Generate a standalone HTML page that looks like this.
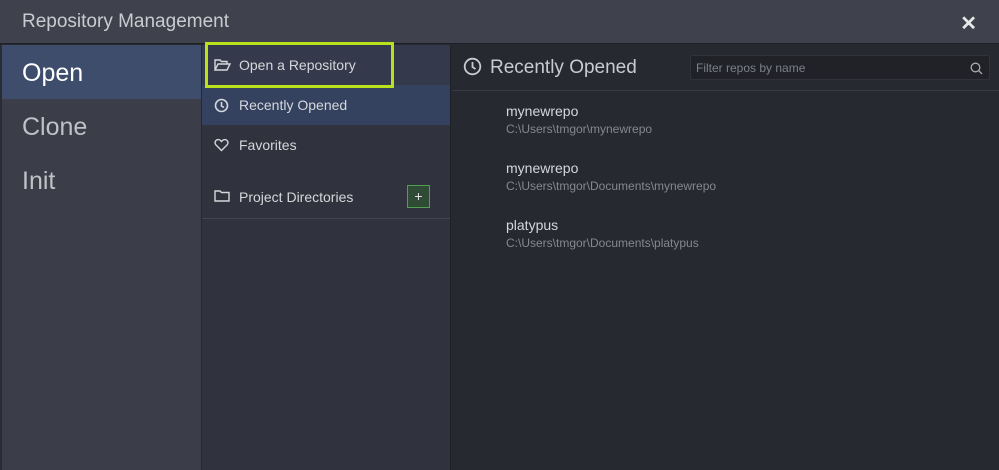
<!DOCTYPE html>
<html><head><style>
*{margin:0;padding:0;box-sizing:border-box}
body{width:999px;height:470px;background:#262930;font-family:"Liberation Sans",sans-serif;position:relative;overflow:hidden}
.title{position:absolute;left:0;top:0;width:999px;height:44px;background:#3f424d;border-bottom:1px solid #1e2026}
.title span{position:absolute;left:22px;top:11px;font-size:19px;color:#c9cbd0}
.x{position:absolute;right:22px;top:11px;font-size:20px;color:#e8e8e8;font-weight:bold}
.left{position:absolute;left:2px;top:45px;width:199px;height:425px;background:#3b3e49}
.left div{height:54px;padding-left:20px;line-height:56px;font-size:25px;color:#bfc1c6}
.left .on{background:#3d4d6b;color:#fff}
.mid{position:absolute;left:202px;top:45px;width:249px;height:425px;background:#30333d;border-right:1px solid #1e2026}
.row{height:40px;position:relative;font-size:14px;color:#d5d7db}
.row span{position:absolute;left:37px;top:12px}
.row svg{position:absolute;left:12px;top:13px}
.hl{position:absolute;left:205px;top:42px;width:189px;height:46px;border:3px solid #b8e21c}
.right{position:absolute;left:452px;top:45px;width:547px;height:425px}
.hdr{height:46px;border-bottom:1px solid #383b45;position:relative}
.hdr span{position:absolute;left:38px;top:12px;font-size:19px;color:#c9cbd0}
.filter{position:absolute;left:238px;top:10px;width:300px;height:25px;background:#202228;border:1px solid #30333b;border-radius:2px;font-size:12px;color:#7d8088;padding:5px 5px}
.item{position:absolute;left:54px}
.item b{display:block;font-weight:normal;font-size:14px;color:#d5d7db}
.item i{display:block;font-style:normal;font-size:12px;color:#85888f;margin-top:3px}
</style></head><body>
<div class="title"><span>Repository Management</span><div class="x">✕</div></div>
<div style="position:absolute;left:0;top:45px;width:2px;height:425px;background:#2a2c33"></div>
<div class="left"><div class="on">Open</div><div>Clone</div><div>Init</div></div>
<div class="mid">
<div class="row" style="background:#343a4b"><svg width="17" height="14" viewBox="0 0 17 14" fill="none" stroke="#d5d7db" stroke-width="1.4"><path d="M1 12V2h5l1.5 1.5H13v2.5M1 12l3-6h12l-3 6z"/></svg><span>Open a Repository</span></div>
<div class="row" style="background:#34425f"><svg width="15" height="15" viewBox="0 0 15 15" fill="none" stroke="#d5d7db" stroke-width="1.6"><circle cx="7.5" cy="7.5" r="6"/><path d="M7.5 4v4l2.5 1.5"/></svg><span>Recently Opened</span></div>
<div class="row"><svg width="15" height="14" viewBox="0 0 15 14" fill="none" stroke="#d5d7db" stroke-width="1.4"><path d="M7.5 12.5L2 7a3 3 0 014.5-4.5l1 1 1-1A3 3 0 0113 7z"/></svg><span>Favorites</span></div>
<div class="row" style="height:54px;border-bottom:1px solid #434651"><svg style="top:24px" width="16" height="14" viewBox="0 0 16 14" fill="none" stroke="#d5d7db" stroke-width="1.4"><path d="M1 2h5l1.5 1.5H15V12H1z"/></svg><span style="top:24px">Project Directories</span>
<div style="position:absolute;left:205px;top:20px;width:23px;height:23px;border:1px solid #4fa04f;background:#2f4a35;color:#e0e0e0;text-align:center;line-height:20px;font-size:14px">+</div></div>
</div>
<div class="hl"></div>
<div class="right">
<div class="hdr"><svg style="position:absolute;left:11px;top:12px" width="19" height="19" viewBox="0 0 19 19" fill="none" stroke="#c9cbd0" stroke-width="1.8"><circle cx="9.5" cy="9.5" r="7.8"/><path d="M9.5 5v5l3 2"/></svg><span>Recently Opened</span>
<div class="filter">Filter repos by name<svg style="position:absolute;right:6px;top:6px" width="13" height="13" viewBox="0 0 13 13" fill="none" stroke="#aaa" stroke-width="1.3"><circle cx="5.5" cy="5.5" r="4.3"/><path d="M8.6 8.6L12 12"/></svg></div></div>
<div class="item" style="top:58px"><b>mynewrepo</b><i>C:\Users\tmgor\mynewrepo</i></div>
<div class="item" style="top:115px"><b>mynewrepo</b><i>C:\Users\tmgor\Documents\mynewrepo</i></div>
<div class="item" style="top:172px"><b>platypus</b><i>C:\Users\tmgor\Documents\platypus</i></div>
</div>
</body></html>
